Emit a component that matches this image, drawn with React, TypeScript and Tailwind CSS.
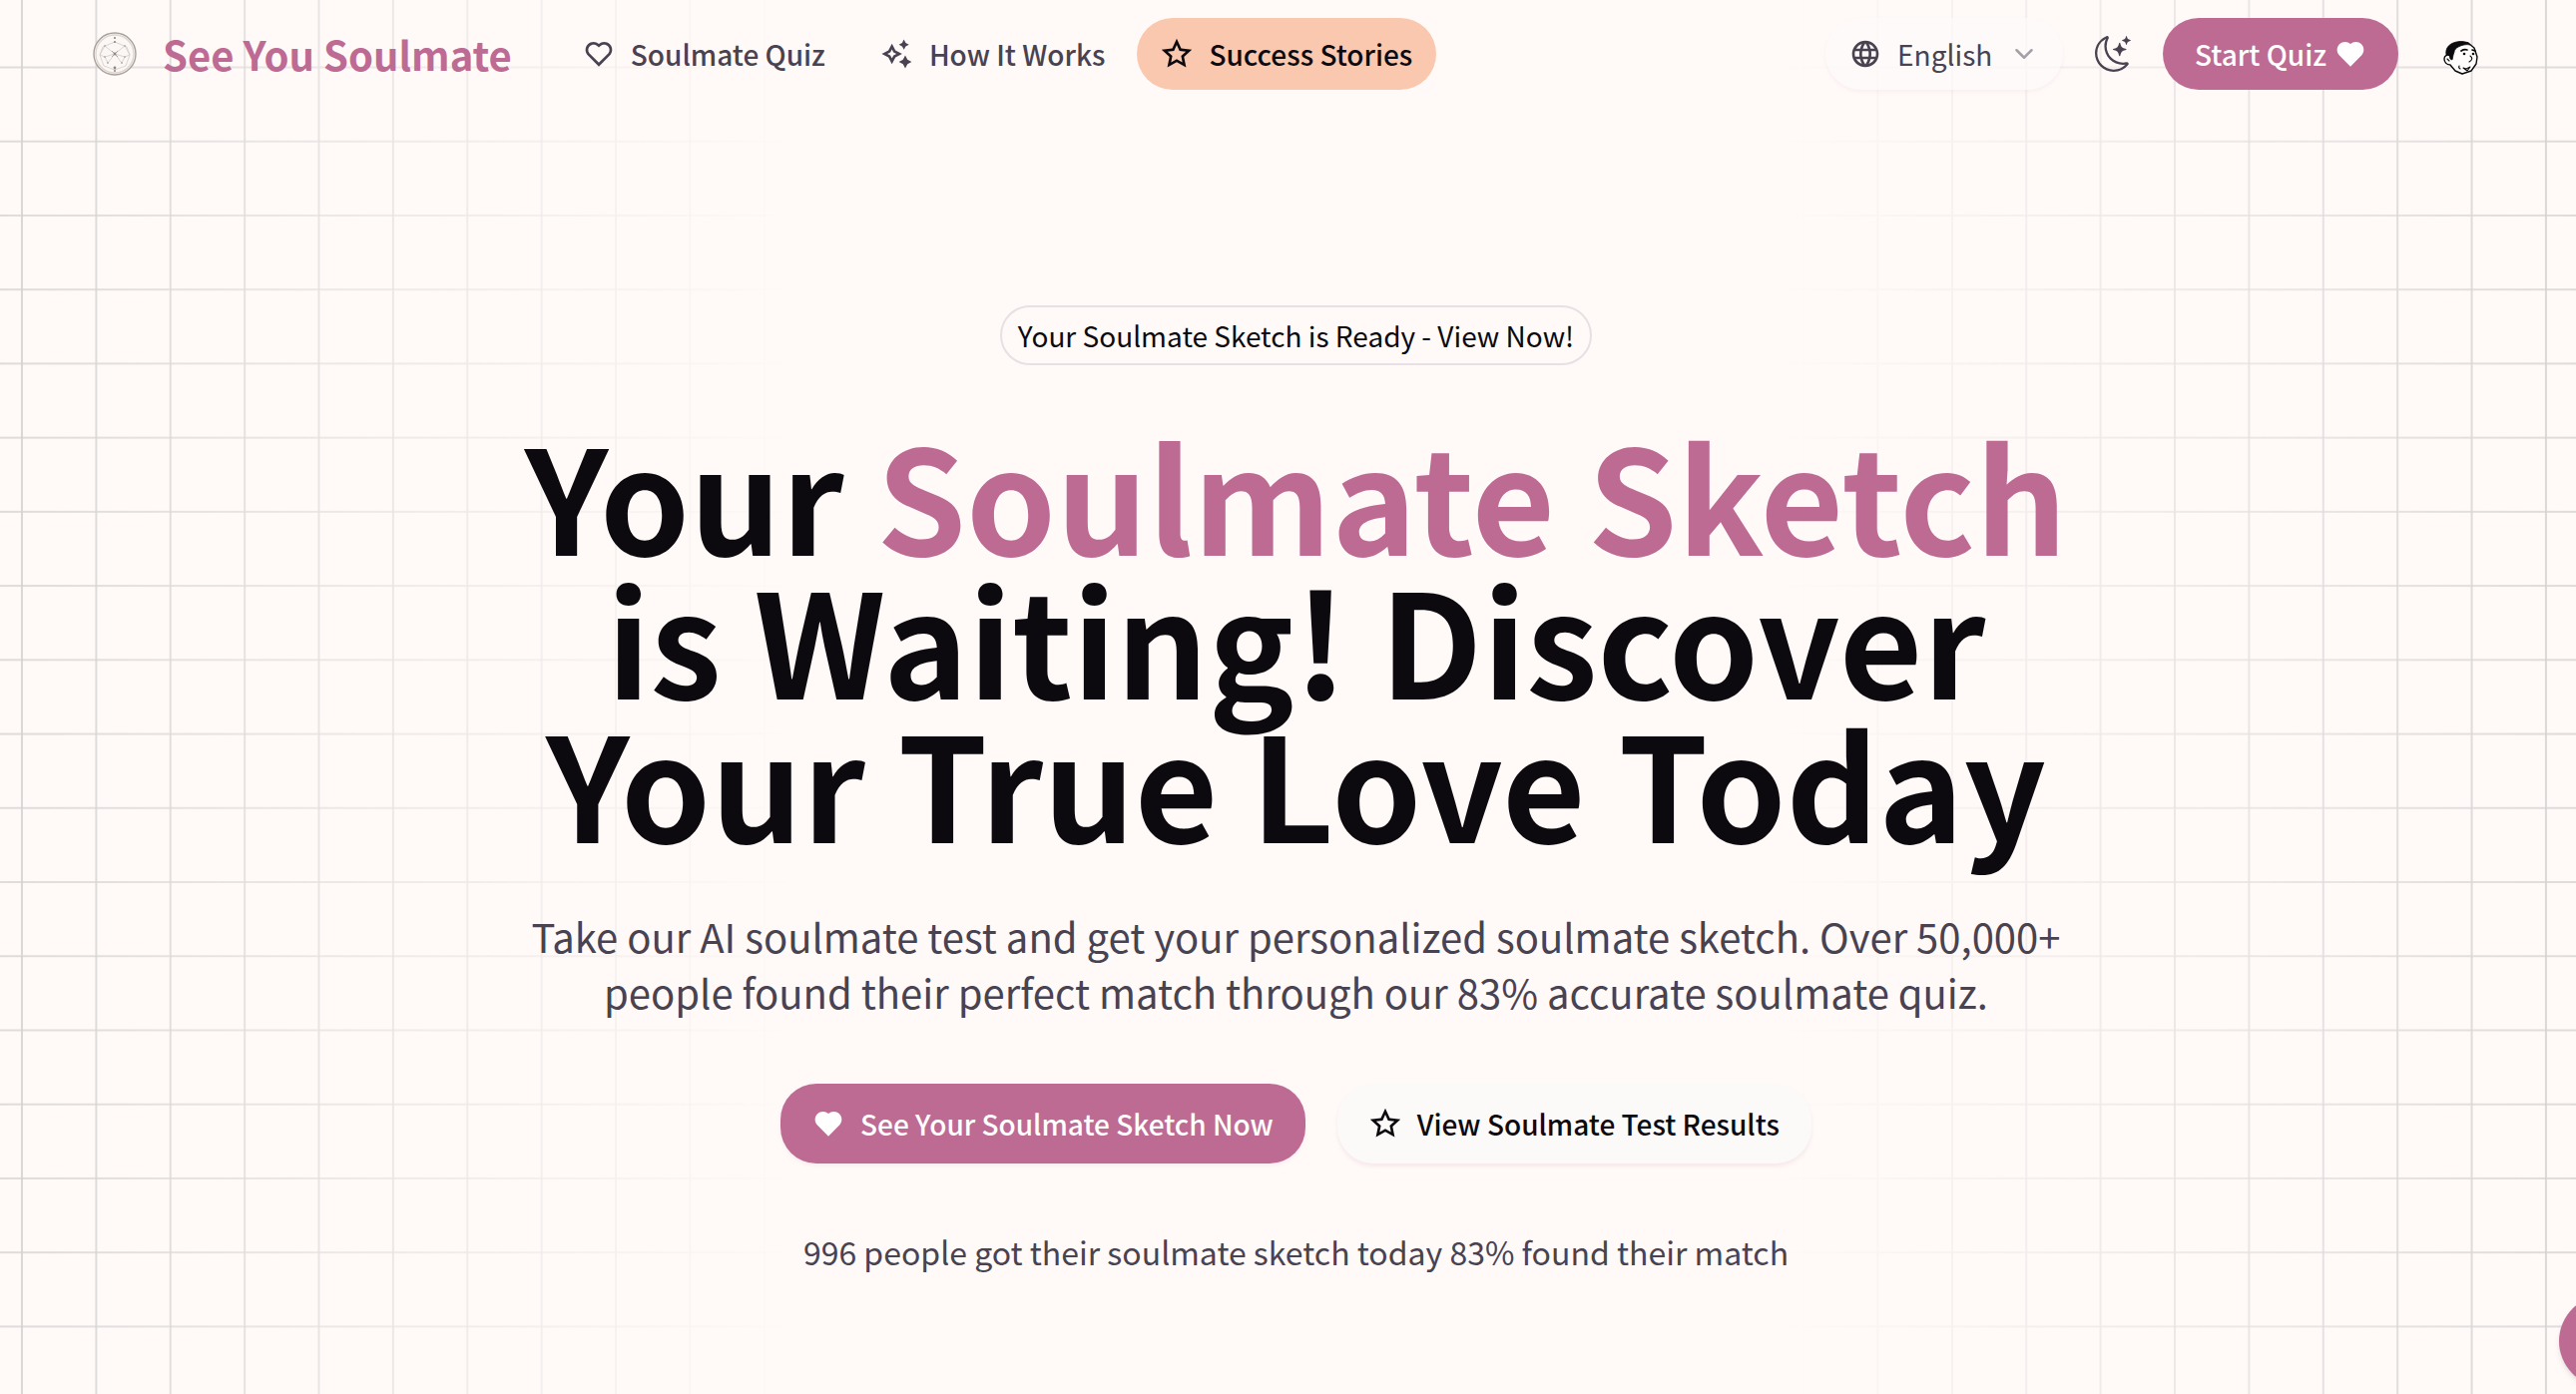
import type { ReactNode } from 'react';
import { BsMoonStars } from 'react-icons/bs';
import { MdLanguage } from 'react-icons/md';
import {
  RiHeartFill,
  RiHeartLine,
  RiSparkling2Line,
  RiStarLine,
} from 'react-icons/ri';
import { ChevronDown } from 'lucide-react';

type NavItem = { title: string; href: string; icon: ReactNode; active?: boolean };

const NAV_ITEMS: NavItem[] = [
  { title: 'Soulmate Quiz', href: '#quiz', icon: <RiHeartLine size={32} /> },
  { title: 'How It Works', href: '#how-it-works', icon: <RiSparkling2Line size={32} /> },
  { title: 'Success Stories', href: '#stories', icon: <RiStarLine size={32} />, active: true },
];

function GridBackground() {
  return (
    <svg
      aria-hidden="true"
      className="pointer-events-none absolute inset-0 -z-10 h-full w-full [mask-image:linear-gradient(to_right,black,transparent_31%,transparent_69%,black)]"
    >
      <defs>
        <pattern id="grid" x="21" y="66.5" width="74.38" height="74.23" patternUnits="userSpaceOnUse">
          <path d="M1 0V74.23M0 1H74.38" fill="none" stroke="#d3d1d1" strokeWidth="1.7" />
        </pattern>
      </defs>
      <rect width="100%" height="100%" fill="url(#grid)" />
    </svg>
  );
}

function Logo() {
  return (
    <svg viewBox="0 0 44 44" className="size-11" fill="none" aria-hidden="true">
      <circle cx="22" cy="22" r="21" fill="#fbf7f4" stroke="#aaa19c" strokeWidth="1.4" />
      <circle cx="22" cy="22" r="19" stroke="#ddd6d1" strokeWidth="1.4" />
      <g stroke="#d3ccc8" strokeWidth="0.8">
        <path d="M22 10 34 15 37 23 33 34 22 38 11 34 7 23 10 15Z" />
        <path d="M22 22 12 14 7 23 12 25 22 22 32 25 37 23 32 14Z" />
        <path d="M22 22 15 31M22 22 29 31M12 25 15 31M32 25 29 31" />
      </g>
      <path d="m19 19 6 6M25 19l-6 6" stroke="#a8a09c" strokeWidth="0.9" />
      <g fill="#8f8783">
        <circle cx="22" cy="6" r="1.1" />
        <circle cx="22" cy="10" r="1.1" />
        <circle cx="22" cy="22" r="1.4" />
        <circle cx="22" cy="36" r="1.4" />
        <circle cx="22" cy="39" r="1" />
      </g>
      <g fill="#b9b1ad">
        <circle cx="12" cy="14" r="1" />
        <circle cx="32" cy="14" r="1" />
        <circle cx="12" cy="25" r="1" />
        <circle cx="32" cy="25" r="1" />
        <circle cx="15" cy="31" r="1" />
        <circle cx="29" cy="31" r="1" />
      </g>
    </svg>
  );
}

function Avatar() {
  return (
    <svg
      viewBox="0 0 36 36"
      className="size-9"
      fill="none"
      stroke="#0b0a0c"
      strokeLinecap="round"
      strokeLinejoin="round"
      aria-hidden="true"
    >
      <path
        d="M8 14 10 7 17 3 26 3 32 8 35 17 34 24 29 31 20 34 13 31 8 25C4 25 2 22 2 19c0-3 3-5 6-3Z"
        fill="#fffdfb"
        strokeWidth="1.4"
      />
      <path
        d="M4 15C3 9 6 5 11 3c5-2 11-2 15 0l2 2c-4-1-8 0-12 2-2 1-4 3-4 5l-1 3-1 5-2-1-1-4Z"
        fill="#0b0a0c"
        strokeWidth="0.8"
      />
      <path d="M19 11q3-2 6-1M30 10l3 1" strokeWidth="1.7" />
      <path d="M28 16q4 3-1 6M17 26q-1 2 1 3M21 28l3 1 4-2-3 4ZM5 19l2 2" strokeWidth="1.1" />
      <circle cx="22" cy="14" r="1.3" fill="#0b0a0c" stroke="none" />
      <circle cx="31" cy="14" r="1.3" fill="#0b0a0c" stroke="none" />
    </svg>
  );
}

function Header() {
  return (
    <header className="flex h-[108px] items-center justify-between pr-[98px] pl-[93px]">
      <div className="flex items-center">
        <a href="#home" className="flex items-center gap-[26px]">
          <Logo />
          <span className="text-[40px] leading-none font-bold text-[#be6b94]">See You Soulmate</span>
        </a>
        <nav className="ml-[47px] flex items-center gap-2">
          {NAV_ITEMS.map((item) => (
            <a
              key={item.title}
              href={item.href}
              className={
                item.active
                  ? 'flex h-[72px] items-center gap-4 rounded-full bg-[#f9c8ae] px-6 text-[28px] font-medium text-[#0c0a0f]'
                  : 'flex h-[72px] items-center gap-4 rounded-full px-6 text-[28px] font-medium text-[#484251]'
              }
            >
              {item.icon}
              {item.title}
            </a>
          ))}
        </nav>
      </div>

      <div className="flex items-center">
        <label className="flex h-[72px] items-center rounded-full bg-[#fcf9f9]/70 px-6 text-[28px] text-[#484251] shadow-[0_2px_4px_rgba(190,107,148,0.08)]">
          <MdLanguage size={32} />
          <select aria-label="Language" className="ml-4 appearance-none bg-transparent">
            <option>English</option>
          </select>
          <ChevronDown size={30} strokeWidth={2} className="ml-4 text-[#a3a0a8]" />
        </label>
        <button type="button" aria-label="Toggle theme" className="ml-8 text-[#484251]">
          <BsMoonStars size={36} />
        </button>
        <a
          href="#quiz"
          className="ml-8 flex h-[72px] items-center gap-2 rounded-full bg-[#be6b94] px-8 text-[28px] font-medium text-white"
        >
          Start Quiz
          <RiHeartFill size={32} />
        </a>
        <button type="button" aria-label="Account" className="ml-11 pt-2">
          <Avatar />
        </button>
      </div>
    </header>
  );
}

export default function App() {
  return (
    <div className="relative isolate min-h-screen overflow-hidden bg-[#fffaf8] font-['Noto_Sans_CJK_SC','Noto_Sans',sans-serif]">
      <GridBackground />
      <Header />

      <main className="flex flex-col items-center pt-[198px] pl-4 text-center">
        <a
          href="#results"
          className="flex h-[60px] items-center rounded-full border-2 border-[#e7e0e4] px-4 text-[28px] text-[#0c0a0f]"
        >
          Your Soulmate Sketch is Ready - View Now!
        </a>

        <h1 className="mt-14 text-[144px] leading-[144px] font-bold text-[#0c0a0f]">
          Your <span className="text-[#be6b94]">Soulmate Sketch</span>
          <br />
          is Waiting! Discover
          <br />
          Your True Love Today
        </h1>

        <p className="mt-14 text-[40px] leading-14 text-[#484251]">
          Take our AI soulmate test and get your personalized soulmate sketch. Over 50,000+
          <br />
          people found their perfect match through our 83% accurate soulmate quiz.
        </p>

        <div className="mt-16 flex gap-8 text-[28px] font-medium">
          <a
            href="#quiz"
            className="flex h-20 items-center gap-4 rounded-[36px] bg-[#be6b94] px-8 text-white shadow-[0_2px_4px_rgba(190,107,148,0.1)]"
          >
            <RiHeartFill size={32} />
            See Your Soulmate Sketch Now
          </a>
          <a
            href="#results"
            className="flex h-20 items-center gap-4 rounded-[36px] bg-[#fcf9f9] px-8 text-[#0c0a0f] shadow-[0_3px_4px_rgba(190,107,148,0.12)]"
          >
            <RiStarLine size={32} />
            View Soulmate Test Results
          </a>
        </div>

        <p className="mt-16 text-[32px] leading-12 text-[#484251]">
          996 people got their soulmate sketch today 83% found their match
        </p>
      </main>

      <button
        type="button"
        aria-label="Open chat"
        className="absolute -right-[75px] bottom-[7px] size-[92px] rounded-full bg-[#be6b94] shadow-md"
      />
    </div>
  );
}
